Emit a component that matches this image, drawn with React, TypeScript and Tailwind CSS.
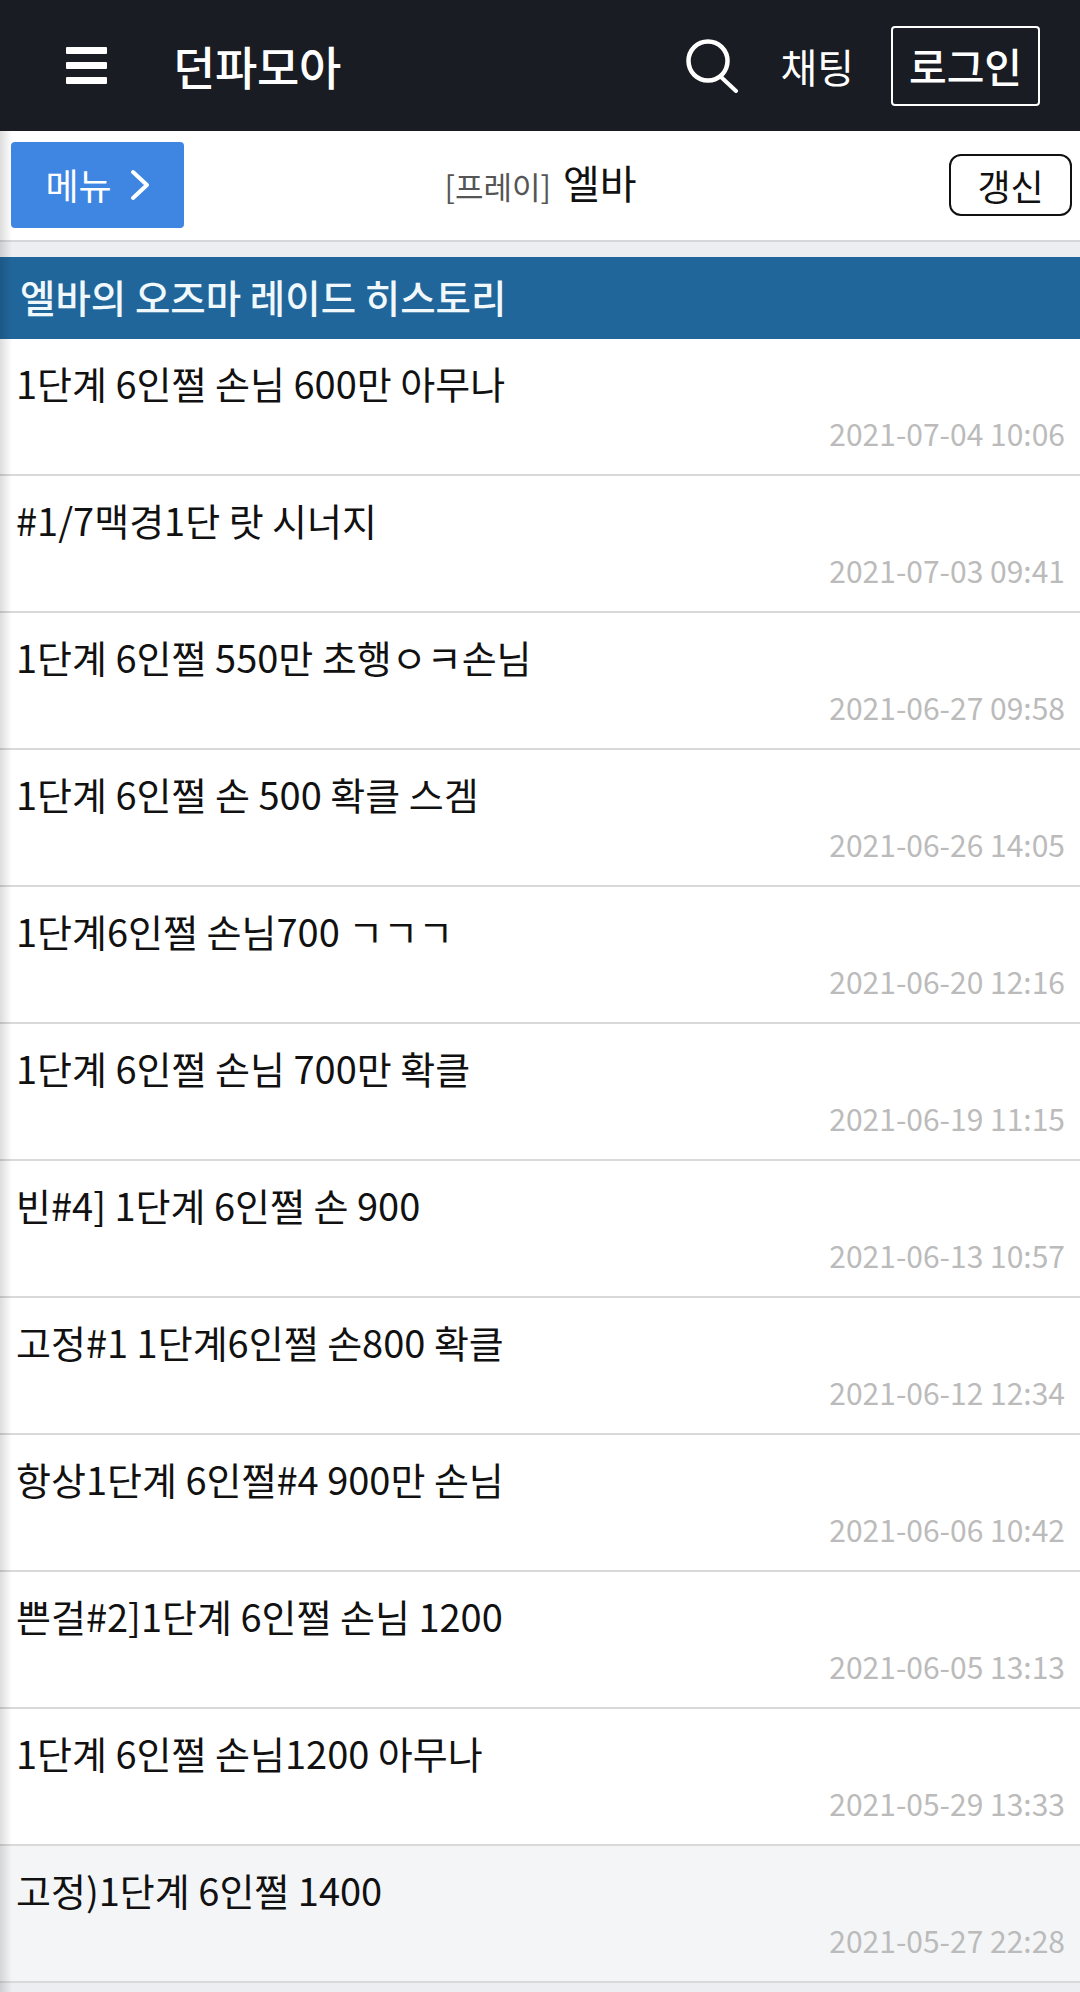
const rows = [
  ["1단계 6인쩔 손님 600만 아무나", "2021-07-04 10:06"],
  ["#1/7맥경1단 랏 시너지", "2021-07-03 09:41"],
  ["1단계 6인쩔 550만 초행ㅇㅋ손님", "2021-06-27 09:58"],
  ["1단계 6인쩔 손 500 확클 스겜", "2021-06-26 14:05"],
  ["1단계6인쩔 손님700 ㄱㄱㄱ", "2021-06-20 12:16"],
  ["1단계 6인쩔 손님 700만 확클", "2021-06-19 11:15"],
  ["빈#4] 1단계 6인쩔 손 900", "2021-06-13 10:57"],
  ["고정#1 1단계6인쩔 손800 확클", "2021-06-12 12:34"],
  ["항상1단계 6인쩔#4 900만 손님", "2021-06-06 10:42"],
  ["쁜걸#2]1단계 6인쩔 손님 1200", "2021-06-05 13:13"],
  ["1단계 6인쩔 손님1200 아무나", "2021-05-29 13:33"],
  ["고정)1단계 6인쩔 1400", "2021-05-27 22:28"],
];

export default function App() {
  return (
    <div className="relative h-[1992px] w-[1080px] overflow-hidden bg-[#eceef2] font-['Noto_Sans_CJK_KR','Noto_Sans',sans-serif]">
      <header className="flex h-[131px] items-center bg-[#191c22] text-white">
        <div className="ml-[66px] flex h-[37px] w-[41px] flex-col justify-between">
          <span className="h-[7px] rounded-[1px] bg-white" />
          <span className="h-[7px] rounded-[1px] bg-white" />
          <span className="h-[7px] rounded-[1px] bg-white" />
        </div>
        <div className="ml-[66px] -translate-y-[1px] text-[46px] font-medium leading-none tracking-[-0.3px]">던파모아</div>
        <svg className="ml-auto h-[56px] w-[54px] -translate-y-[1px]" viewBox="0 0 54 56" fill="none" stroke="white" strokeWidth="4.5">
          <circle cx="23" cy="24" r="19.5" />
          <path d="M36 40L51 54" strokeWidth="4" strokeLinecap="round" />
        </svg>
        <div className="ml-[41px] text-[40px] leading-none">채팅</div>
        <div className="ml-[37px] mr-[40px] flex h-[80px] w-[149px] items-center justify-center rounded-[4px] border-2 border-white text-[41px] font-medium leading-none">
          로그인
        </div>
      </header>

      <div className="flex h-[111px] items-center border-b-2 border-[#d5d8da] bg-white pb-[1px]">
        <div className="ml-[11px] flex h-[86px] w-[173px] items-center justify-center gap-[18px] rounded-[4px] bg-[#3f86e3] text-white">
          <span className="text-[36px] leading-none -translate-y-[1px]">메뉴</span>
          <svg className="h-[32px] w-[20px]" viewBox="0 0 20 32" fill="none" stroke="white" strokeWidth="4" strokeLinecap="round" strokeLinejoin="round">
            <path d="M3 3L17 16L3 29" />
          </svg>
        </div>
        <div className="flex flex-1 -translate-y-[3px] items-baseline justify-center pr-[52px] leading-none">
          <span className="text-[31px] text-[#555]">[프레이]</span>
          <span className="ml-[12px] text-[40px] text-[#111]">엘바</span>
        </div>
        <div className="mr-[8px] flex h-[62px] w-[123px] items-center justify-center rounded-[12px] border-2 border-[#111] text-[36px] leading-none text-[#111]">
          갱신
        </div>
      </div>

      <div className="mt-[15px] flex h-[82px] items-center bg-[#20669b] pb-[3px] pl-[20px] text-[38.5px] font-medium leading-none text-[#f0f8fc]">
        엘바의 오즈마 레이드 히스토리
      </div>

      <ul>
        {rows.map(([title, date], i) => (
          <li
            key={date}
            className={`flex h-[137px] flex-col border-b-2 border-[#d9d9d9] pl-[16px] pr-[15px] ${i === 11 ? "bg-[#f4f5f7]" : "bg-white"}`}
          >
            <div className="mt-[21px] text-[38px] leading-[46px] text-[#111]">{title}</div>
            <div className="mt-[7px] text-right text-[30px] leading-[40px] text-[#bbb]">{date}</div>
          </li>
        ))}
      </ul>

      <div className="pointer-events-none absolute bottom-0 left-0 top-[131px] w-[12px] bg-gradient-to-r from-[#00000022] to-transparent" />
    </div>
  );
}
